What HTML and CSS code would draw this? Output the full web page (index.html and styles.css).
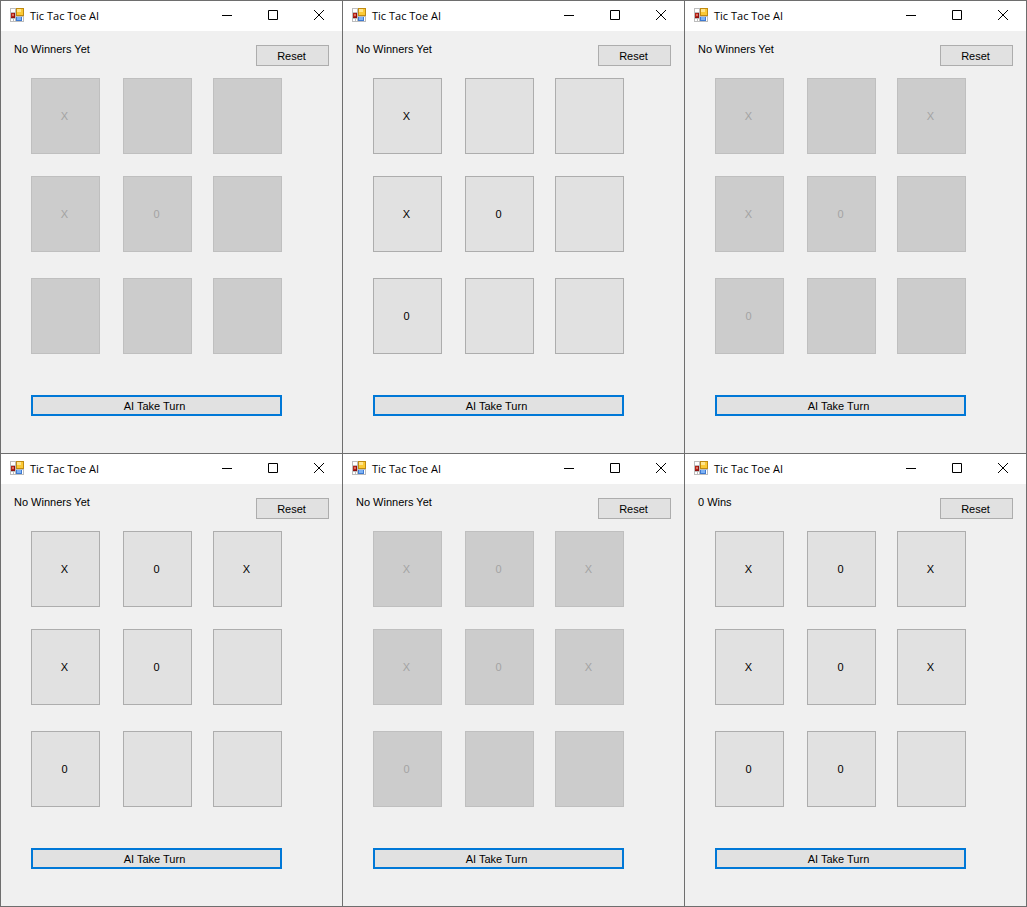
FILE: index.html
```html
<!DOCTYPE html>
<html lang="en">
<head>
<meta charset="utf-8">
<title>Tic Tac Toe AI</title>
<link rel="stylesheet" href="styles.css">
</head>
<body>
<main class="desktop" id="desktop"></main>

<template id="window-template">
  <section class="window">
    <header class="titlebar">
      <svg class="app-icon" viewBox="0 0 14 14" aria-hidden="true">
        <rect width="14" height="14" fill="#bdbdbd"/>
        <path d="M1 1h4v3H1zM1 11h2v2H1zM4 11h1v2H4zM12 9h1v4h-1z" fill="#fff"/>
        <rect x="1" y="5" width="4" height="5" fill="#8d1010"/>
        <rect x="1" y="5" width="3" height="4" fill="#b52318"/>
        <rect x="2" y="6" width="2" height="2" fill="#e0705c"/>
        <rect x="6" y="0" width="8" height="8" fill="#c08a10"/>
        <rect x="7" y="1" width="6" height="6" fill="#fbc935"/>
        <rect x="7" y="1" width="4" height="3" fill="#ffe58c"/>
        <rect x="6" y="9" width="6" height="4" fill="#3e79d0"/>
        <rect x="7" y="9" width="4" height="3" fill="#7db2f5"/>
      </svg>
      <h1 class="title">Tic Tac Toe AI</h1>
      <button class="caption" type="button" aria-label="Minimize">
        <svg viewBox="0 0 10 10"><path d="M0 5.5h10"/></svg>
      </button>
      <button class="caption" type="button" aria-label="Maximize">
        <svg viewBox="0 0 10 10"><path d="M.5 .5h9v9h-9z"/></svg>
      </button>
      <button class="caption" type="button" aria-label="Close">
        <svg viewBox="0 0 10 10"><path d="M0 0l10 10M10 0L0 10"/></svg>
      </button>
    </header>
    <div class="client">
      <div class="top">
        <p class="status"></p>
        <button class="button reset" type="button">Reset</button>
      </div>
      <div class="board"></div>
      <button class="button turn" type="button">AI Take Turn</button>
    </div>
  </section>
</template>
<script src="game.js"></script>
</body>
</html>
```
FILE: styles.css
```css
* {
  box-sizing: border-box;
}

body {
  margin: 0;
  background: #fff;
  color: #000;
  font: 11px/14px "Liberation Sans", Arial, sans-serif;
}

.desktop {
  display: grid;
  grid-template-columns: repeat(3, 1fr);
  gap: 1px;
  padding: 1px;
  background: #6e6e6e;
}

.window {
  display: flex;
  flex-direction: column;
  background: #f0f0f0;
}

.titlebar {
  display: flex;
  align-items: center;
  height: 30px;
  padding: 0 0 2px 9px;
  background: #fff;
}

.app-icon {
  width: 14px;
  height: 14px;
}

.title {
  flex: 1;
  margin: 2px 0 0 6px;
  font: 11px/16px "Open Sans", "Noto Sans", sans-serif;
}

.caption {
  display: flex;
  justify-content: center;
  align-items: center;
  width: 46px;
  height: 28px;
  padding: 0;
  border: 0;
  background: none;
}

.caption svg {
  width: 10px;
  height: 10px;
  fill: none;
  stroke: #000;
}

.client {
  display: flex;
  flex-direction: column;
  padding: 11px 13px 37px;
}

.top {
  display: flex;
  justify-content: space-between;
  align-items: flex-start;
}

.status {
  margin: 0;
}

.button,
.cell {
  padding: 0 2px 0 0;
  border: 1px solid #adadad;
  background: #e1e1e1;
  color: #000;
  font: inherit;
}

.reset {
  width: 73px;
  height: 21px;
  margin-top: 3px;
}

.board {
  display: grid;
  grid-template-columns: 1fr 23px 1fr 21px 1fr;
  grid-template-rows: 76px 22px 76px 26px 76px;
  margin: 12px 47px 0 17px;
}

.cell:disabled {
  border-color: #bfbfbf;
  background: #ccc;
  color: #a3a3a3;
}

.cell:nth-child(3n + 1) { grid-column: 1; }
.cell:nth-child(3n + 2) { grid-column: 3; }
.cell:nth-child(3n) { grid-column: 5; }
.cell:nth-child(-n + 3) { grid-row: 1; }
.cell:nth-child(n + 4) { grid-row: 3; }
.cell:nth-child(n + 7) { grid-row: 5; }

.turn {
  height: 21px;
  margin: 41px 47px 0 17px;
  padding-right: 4px;
  border: 2px solid #0078d7;
}
```
FILE: game.js
```js
const games = [
  { status: "No Winners Yet", cells: "X..X0....", locked: true },
  { status: "No Winners Yet", cells: "X..X0.0..", locked: false },
  { status: "No Winners Yet", cells: "X.XX0.0..", locked: true },
  { status: "No Winners Yet", cells: "X0XX0.0..", locked: false },
  { status: "No Winners Yet", cells: "X0XX0X0..", locked: true },
  { status: "0 Wins", cells: "X0XX0X00.", locked: false }
];

const desktop = document.getElementById("desktop");
const template = document.getElementById("window-template");

for (const game of games) {
  const view = template.content.cloneNode(true);
  view.querySelector(".status").textContent = game.status;
  const board = view.querySelector(".board");
  [...game.cells].forEach((mark, index) => {
    const cell = document.createElement("button");
    cell.type = "button";
    cell.className = "cell";
    cell.disabled = game.locked;
    cell.textContent = mark === "." ? "" : mark;
    cell.setAttribute("aria-label", "Square " + (index + 1) + " " + cell.textContent);
    board.append(cell);
  });
  desktop.append(view);
}
```
